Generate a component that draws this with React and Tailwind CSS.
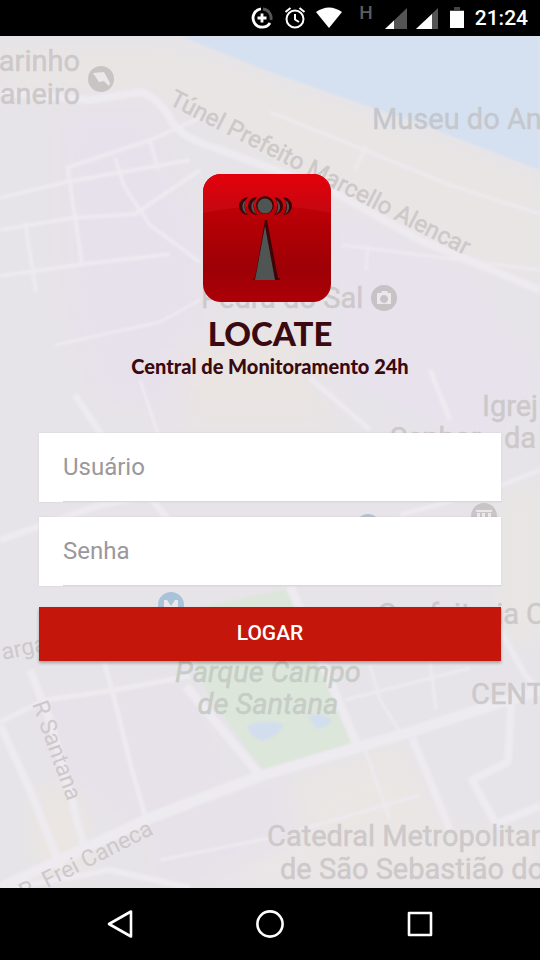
import React, { useState } from "react";

const roads = [
  { d: "M0 92 L90 100 L140 92 Q160 98 172 122 Q182 138 215 148 L330 190 L420 240 L540 290", w: 8 },
  { d: "M270 112 L360 148 L450 185 L540 214", w: 3 },
  { d: "M0 198 L66 182 L190 160 M66 168 L150 140 L200 118", w: 4 },
  { d: "M0 230 L72 218 L135 214 L200 170", w: 4 },
  { d: "M68 170 L82 265 M115 158 L124 186 L150 225 L200 262", w: 4 },
  { d: "M25 222 L36 292 M0 276 L84 264 L170 254 M150 140 L158 170", w: 4 },
  { d: "M366 146 L355 170 M342 245 L540 270 M368 246 L366 270", w: 3 },
  { d: "M75 395 L105 440 L200 560 M0 540 L100 505 L175 490", w: 7 },
  { d: "M55 345 L160 322 L200 300 M140 380 L160 440", w: 3 },
  { d: "M310 378 L370 430 M430 370 L450 420 M540 470 L490 490 L400 515", w: 5 },
  { d: "M290 586 L357 745 M186 686 L262 778", w: 9 },
  { d: "M0 722 L45 700 L115 690 L190 676", w: 5 },
  { d: "M0 725 L30 790 L62 870 M30 670 L50 720 L85 850", w: 8 },
  { d: "M112 690 L132 770 L148 826 M104 662 L112 690", w: 5 },
  { d: "M0 888 L150 818 L260 776 L410 732 L540 690", w: 11 },
  { d: "M412 738 L450 830 M512 690 L508 762 L472 780 L496 824 L540 806", w: 8 },
  { d: "M370 665 L380 700 L402 735 M430 662 L436 710 M345 700 L470 668", w: 3 },
  { d: "M365 750 L390 820 M300 830 L420 795 M160 860 L270 838", w: 3 },
  { d: "M500 630 L525 675 L540 690 M0 890 L110 870 L190 888", w: 6 },
];

const glyphs = {
  arrow: "M-8 -6 L3 -7 L9 4 L8 7 L3 2 L-2 3 Z",
  camera: "M-7 -5 H-3 L-2 -7 H3 L4 -5 H7 V6 H-7 Z M0 -3 A4 4 0 1 0 0.100 -3 Z",
  museum: "M-8 -6 H8 V-4 H-8 Z M-7 -3 H-4 V6 H-7 Z M-2 -3 H1 V6 H-2 Z M4 -3 H7 V6 H4 Z",
  metro: "M-7 6 V-5 H-4 L0 1 L4 -5 H7 V6 Z",
};

function Poi({ x, y, color, glyph }) {
  return (
    <g transform={`translate(${x} ${y})`}>
      <circle r="13" fill={color} />
      <path d={glyphs[glyph]} fill="#ebe7ea" fillRule="evenodd" />
    </g>
  );
}

function MapBackground() {
  return (
    <svg
      className="absolute inset-0 w-full h-full"
      viewBox="0 36 540 852"
      preserveAspectRatio="xMidYMid slice"
      aria-hidden="true"
    >
      <defs>
        <filter id="soft" x="-20%" y="-20%" width="140%" height="140%">
          <feGaussianBlur stdDeviation="14" />
        </filter>
        <filter id="edge">
          <feGaussianBlur stdDeviation="1.2" />
        </filter>
      </defs>
      <rect y="36" width="540" height="852" fill="#e6e4e8" />
      {/* districts */}
      <g filter="url(#soft)">
        <path d="M60 110 L150 100 L210 250 L200 420 L90 400 L60 280 Z" fill="#e7e1eb" />
        <path d="M330 200 L470 270 L540 380 L480 450 L340 380 Z" fill="#e8e2ed" />
        <path d="M0 50 L180 50 L540 180 L540 290 L330 200 L180 100 L0 85 Z" fill="#e9e5e4" />
        <path d="M180 350 L300 320 L340 430 L180 430 Z" fill="#eae4e3" />
        <path d="M30 700 L180 680 L230 770 L150 830 L60 780 Z" fill="#e7e1ea" />
        <path d="M150 830 L270 780 L330 850 L160 890 Z" fill="#e7e1ea" />
        <path d="M290 780 L400 740 L450 830 L300 850 Z" fill="#eae6e4" />
        <path d="M500 500 L540 480 L540 640 L500 640 Z" fill="#e9e6e3" />
        <path d="M30 790 L80 790 L90 880 L40 880 Z" fill="#ebe6e2" />
        <path d="M280 845 L540 830 L540 890 L200 890 Z" fill="#ebe6e6" />
      </g>
      <path d="M180 36 L270 72 L420 124 L540 170 V36 Z" fill="#d5e1f0" filter="url(#edge)" />
      <path d="M180 612 L290 588 L355 742 L264 772 L205 690 Z" fill="#dde6da" filter="url(#edge)" />
      <g filter="url(#edge)" fill="none" stroke="#edeaf0" strokeLinejoin="round">
        {roads.map((road) => (
          <path key={road.d} d={road.d} strokeWidth={road.w} />
        ))}
      </g>
      <path
        d="M247 726 Q262 718 284 724 Q278 738 262 741 Q250 738 247 726 Z M308 716 Q322 712 332 720 Q326 730 316 728 Z"
        fill="#d2deee"
        filter="url(#edge)"
      />

      <g fontFamily="Roboto, sans-serif" fontSize="29" fill="#cdc9ca" stroke="#cdc9ca" strokeWidth="0.5">
        <text x="80" y="71" textAnchor="end">arinho</text>
        <text x="80" y="104" textAnchor="end">aneiro</text>
        <text x="372" y="129" fill="#c2c7cf">Museu do An</text>
        <text x="201" y="308">Pedra do Sal</text>
        <text x="482" y="416">Igrej</text>
        <text x="390" y="448">Senhor</text>
        <text x="504" y="448">da</text>
        <text x="519" y="624" textAnchor="end">Confeitaria</text>
        <text x="526" y="624">C</text>
        <text x="471" y="704">CENT</text>
        <text x="267" y="846">Catedral Metropolitan</text>
        <text x="280" y="879">de São Sebastião do</text>
        <g fontStyle="italic" textAnchor="middle" fill="#c6ccc6" stroke="#c6ccc6">
          <text x="268" y="682">Parque Campo</text>
          <text x="268" y="714">de Santana</text>
        </g>
        <g fontSize="24">
          <text transform="translate(168 104) rotate(27)">Túnel Prefeito Marcello Alencar</text>
        </g>
        <g fontSize="23" strokeWidth="0">
          <text transform="translate(3 660) rotate(-12)">arga</text>
          <text transform="translate(32 704) rotate(70)">R Santana</text>
          <text transform="translate(24 900) rotate(-27)">R. Frei Caneca</text>
        </g>
      </g>
      <Poi x={101} y={79} color="#c9c4c4" glyph="arrow" />
      <Poi x={384} y={298} color="#c6c2c6" glyph="camera" />
      <Poi x={484} y={516} color="#c9c5c6" glyph="museum" />
      <Poi x={368} y={527} color="#b5c1cd" glyph="metro" />
      <Poi x={171} y={605} color="#a9c3d8" glyph="metro" />
    </svg>
  );
}

function StatusBar() {
  return (
    <header className="h-9 bg-black text-white flex items-center justify-end pr-3">
      <svg className="w-6 h-6 mr-[9px]" viewBox="0 0 24 24" fill="none" strokeWidth="2.8">
        <path d="M13 3 A9.2 9.2 0 0 1 21 14" stroke="#555" />
        <path d="M11 2.9 A9.2 9.2 0 1 0 20 17" stroke="#fff" />
        <path d="M12 7.5 V16.500 M7.500 12 H16.500" stroke="#fff" />
      </svg>
      <svg className="w-6 h-6 mr-2" viewBox="0 0 24 24" fill="none" stroke="#fff" strokeWidth="2">
        <circle cx="12" cy="13" r="8.500" />
        <path d="M12 8 V13.500 L16 16 M2.500 6 L7.500 2 M21.500 6 L16.500 2" />
      </svg>
      <svg className="w-7 h-6 mr-4" viewBox="0 0 28 24" fill="#fff">
        <path d="M1 6 Q14 -3 27 6 L14 22 Z" />
      </svg>
      <span className="self-start mt-1 mr-3 font-medium text-[19px] leading-[18px] text-[#5c5c5c]">H</span>
      <svg className="w-[22px] h-6 mr-[9px]" viewBox="0 0 22 24">
        <path d="M0 23 L22 2 V23 Z" fill="#555" />
        <path d="M0 23 L9 14.500 V23 Z" fill="#fff" />
      </svg>
      <svg className="w-[22px] h-6 mr-3" viewBox="0 0 22 24">
        <path d="M0 23 L22 2 V23 Z" fill="#555" />
        <path d="M0 23 L16 8 V23 Z" fill="#fff" />
      </svg>
      <svg className="w-[14px] h-6 mr-[11px]" viewBox="0 0 14 24">
        <path d="M4 1 H10 V4 H14 V7 H0 V4 H4 Z" fill="#444" />
        <path d="M0 5 H14 V22 H0 Z" fill="#fff" />
      </svg>
      <time className="font-medium text-[21px] leading-6">21:24</time>
    </header>
  );
}

function Logo() {
  return (
    <svg className="w-32 h-32 mr-1.5" viewBox="0 0 128 128">
      <defs>
        <linearGradient id="red" x1="0" y1="0" x2="0" y2="1">
          <stop offset="0" stopColor="#d20008" />
          <stop offset="0.4" stopColor="#b30006" />
          <stop offset="0.75" stopColor="#9d0006" />
          <stop offset="1" stopColor="#ad0008" />
        </linearGradient>
        <linearGradient id="gloss" x1="0" y1="0" x2="0" y2="1">
          <stop offset="0" stopColor="#e3000a" />
          <stop offset="1" stopColor="#c40810" />
        </linearGradient>
        <clipPath id="tile">
          <rect width="128" height="128" rx="18" />
        </clipPath>
      </defs>
      <g clipPath="url(#tile)">
        <rect width="128" height="128" fill="url(#red)" />
        <path d="M0 0 H128 V39 Q64 25 0 39 Z" fill="url(#gloss)" />
      </g>
      {/* dark cut-out edge first, grey fill shifted over it */}
      <g fill="#3d0508">
        <path d="M45 23 A9 9 0 0 0 45 41 A14 14 0 0 1 45 23 Z" />
        <path d="M54 23 A9 9 0 0 0 54 41 A14 14 0 0 1 54 23 Z" />
        <path d="M71 23 A9 9 0 0 1 71 41 A14 14 0 0 0 71 23 Z" />
        <path d="M80 23 A9 9 0 0 1 80 41 A14 14 0 0 0 80 23 Z" />
        <circle cx="62" cy="31" r="9" />
        <path d="M62 46 L64 46 L75 104 H77 V106 H50 V104 H52 Z" />
      </g>
      <g fill="#4f5552">
        <path d="M43 26 A8 8 0 0 0 44 40 A14 14 0 0 1 43 26 Z" />
        <path d="M52 26 A8 8 0 0 0 53 40 A14 14 0 0 1 52 26 Z" />
        <path d="M73 26 A8 8 0 0 1 73 40 A14 14 0 0 0 73 26 Z" />
        <path d="M82 26 A8 8 0 0 1 82 40 A14 14 0 0 0 82 26 Z" />
        <circle cx="62" cy="32" r="7.500" />
        <path d="M62 52 L72 106 H52 Z" />
      </g>
    </svg>
  );
}

function Field({ id, label, type, value, onChange }) {
  return (
    <div className="bg-white pl-6 shadow-[0_0_2px_rgba(0,0,0,0.08)]">
      <label htmlFor={id} className="sr-only">
        {label}
      </label>
      <input
        id={id}
        type={type}
        placeholder={label}
        value={value}
        onChange={(e) => onChange(e.target.value)}
        className="block w-full h-[69px] border-b border-[#d8d8d8] text-2xl text-[#444] placeholder:text-[#9b979b] focus:outline-none"
      />
    </div>
  );
}

function SystemNav() {
  return (
    <nav className="h-18 bg-black text-white flex justify-center">
      <button type="button" aria-label="Voltar" className="w-[150px] flex items-center justify-center">
        <svg className="w-8 h-8" viewBox="0 0 32 32" fill="none" stroke="currentColor" strokeWidth="2.600" strokeLinejoin="round">
          <path d="M5 16 L27 3.500 V28.500 Z" />
        </svg>
      </button>
      <button type="button" aria-label="Início" className="w-[150px] flex items-center justify-center">
        <svg className="w-8 h-8" viewBox="0 0 32 32" fill="none" stroke="currentColor" strokeWidth="2.600">
          <circle cx="16" cy="16" r="12.600" />
        </svg>
      </button>
      <button type="button" aria-label="Recentes" className="w-[150px] flex items-center justify-center">
        <svg className="w-8 h-8" viewBox="0 0 32 32" fill="none" stroke="currentColor" strokeWidth="2.600" strokeLinejoin="round">
          <rect x="5" y="5" width="22" height="22" />
        </svg>
      </button>
    </nav>
  );
}

export default function App() {
  const [user, setUser] = useState("");
  const [password, setPassword] = useState("");

  const handleSubmit = (event) => {
    event.preventDefault();
  };

  return (
    <div className="min-h-screen flex flex-col bg-black font-[Roboto,sans-serif]">
      <StatusBar />
      <main className="relative flex-1 overflow-hidden">
        <MapBackground />
        <div className="relative px-[39px] pt-[138px] pb-10">
          <div className="flex flex-col items-center text-[#3a0a10] font-[Lato,sans-serif] font-black">
            <Logo />
            <h1 className="mt-3 text-[33px] leading-[38px]">LOCATE</h1>
            <p className="text-[20px] leading-7">Central de Monitoramento 24h</p>
          </div>
          <form onSubmit={handleSubmit} className="mt-[53px] flex flex-col gap-[15px]">
            <Field id="user" label="Usuário" type="text" value={user} onChange={setUser} />
            <Field id="password" label="Senha" type="password" value={password} onChange={setPassword} />
            <button
              type="submit"
              className="mt-[6px] h-[54px] bg-[#c5160b] text-white text-[21px] font-medium shadow-[0_2px_3px_rgba(0,0,0,0.3)]"
            >
              LOGAR
            </button>
          </form>
        </div>
      </main>
      <SystemNav />
    </div>
  );
}
